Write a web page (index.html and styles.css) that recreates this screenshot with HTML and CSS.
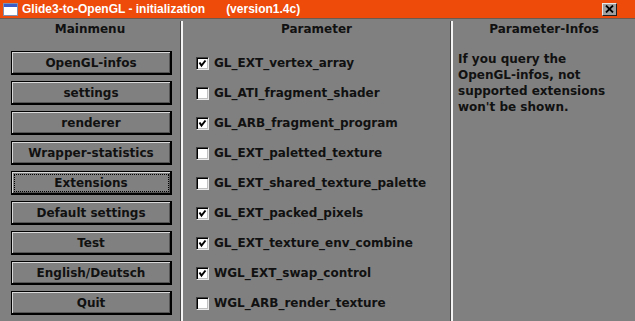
FILE: index.html
```html
<!DOCTYPE html>
<html>
<head>
<meta charset="utf-8">
<link rel="stylesheet" href="styles.css">
</head>
<body>
<div class="window">
  <div class="titlebar">
    <svg class="app-icon" width="15" height="13" viewBox="0 0 15 13">
      <rect x="0.5" y="0.5" width="14" height="12" fill="#ffffff" stroke="#8090b0"/>
      <rect x="1" y="1" width="13" height="3" fill="#3a5bc8"/>
    </svg>
    <div class="title">Glide3-to-OpenGL - initialization</div>
    <div class="version">(version1.4c)</div>
    <div class="closebtn">
      <svg width="9" height="8" viewBox="0 0 9 8"><path d="M1 0.5 L8 7.5 M8 0.5 L1 7.5" stroke="#000" stroke-width="1.8"/></svg>
    </div>
  </div>
  <div class="panes">
    <div class="pane menu">
      <div class="head">Mainmenu</div>
      <div class="buttons">
        <div class="btn">OpenGL-infos</div>
        <div class="btn">settings</div>
        <div class="btn">renderer</div>
        <div class="btn">Wrapper-statistics</div>
        <div class="btn focus">Extensions</div>
        <div class="btn">Default settings</div>
        <div class="btn">Test</div>
        <div class="btn">English/Deutsch</div>
        <div class="btn">Quit</div>
      </div>
    </div>
    <div class="pane params">
      <div class="head">Parameter</div>
      <div class="rows">
        <div class="row"><span class="cb on"><svg width="9" height="9" viewBox="0 0 9 9"><path d="M1.5 3.5 L3.5 6.5 L7.5 1.5" fill="none" stroke="#000" stroke-width="2"/></svg></span>GL_EXT_vertex_array</div>
        <div class="row"><span class="cb"></span>GL_ATI_fragment_shader</div>
        <div class="row"><span class="cb on"><svg width="9" height="9" viewBox="0 0 9 9"><path d="M1.5 3.5 L3.5 6.5 L7.5 1.5" fill="none" stroke="#000" stroke-width="2"/></svg></span>GL_ARB_fragment_program</div>
        <div class="row"><span class="cb"></span>GL_EXT_paletted_texture</div>
        <div class="row"><span class="cb"></span>GL_EXT_shared_texture_palette</div>
        <div class="row"><span class="cb on"><svg width="9" height="9" viewBox="0 0 9 9"><path d="M1.5 3.5 L3.5 6.5 L7.5 1.5" fill="none" stroke="#000" stroke-width="2"/></svg></span>GL_EXT_packed_pixels</div>
        <div class="row"><span class="cb on"><svg width="9" height="9" viewBox="0 0 9 9"><path d="M1.5 3.5 L3.5 6.5 L7.5 1.5" fill="none" stroke="#000" stroke-width="2"/></svg></span>GL_EXT_texture_env_combine</div>
        <div class="row"><span class="cb on"><svg width="9" height="9" viewBox="0 0 9 9"><path d="M1.5 3.5 L3.5 6.5 L7.5 1.5" fill="none" stroke="#000" stroke-width="2"/></svg></span>WGL_EXT_swap_control</div>
        <div class="row"><span class="cb"></span>WGL_ARB_render_texture</div>
      </div>
    </div>
    <div class="pane infos">
      <div class="head">Parameter-Infos</div>
      <p class="info">If you query the<br>OpenGL-infos, not<br>supported extensions<br>won't be shown.</p>
    </div>
  </div>
</div>
</body>
</html>
```
FILE: styles.css
```css
* { box-sizing: border-box; }
html, body { margin: 0; padding: 0; background: #808080; overflow: hidden; }
body {
  font-family: "DejaVu Sans", Verdana, sans-serif;
  font-weight: bold;
  font-size: 12px;
  color: #111;
}
.window { width: 100%; max-width: 635px; height: 321px; overflow: hidden; background: #808080; }
.titlebar {
  height: 19px;
  background: #ee4a0a;
  border-bottom: 1px solid #6a5a50;
  display: grid;
  grid-template-columns: 15px auto auto 1fr;
  align-items: center;
  padding: 0 4px 0 3px;
  color: #fff;
  line-height: 16px;
  font-family: "Liberation Sans", Arial, sans-serif;
  font-size: 12px;
}
.app-icon { display: block; }
.title { margin-left: 4px; }
.version { margin-left: 21px; }
.closebtn {
  justify-self: end;
  margin-right: 14px;
  width: 15px;
  height: 13px;
  background: #a0a0a0;
  border-top: 1px solid #e8e8e8;
  border-left: 1px solid #e8e8e8;
  border-right: 1px solid #202020;
  border-bottom: 1px solid #202020;
  display: flex;
  align-items: center;
  justify-content: center;
}
.closebtn svg { display: block; }
.panes { display: flex; height: 302px; padding-top: 2px; }
.pane { height: 100%; }
.head { text-align: center; line-height: 16px; height: 16px; }
.menu { width: 181px; flex: none; border-right: 1px solid #4a4a4a; }
.params { width: 270px; flex: none; border-left: 2px solid #f4f4f4; border-right: 1px solid #4a4a4a; }
.infos { flex: 1; border-left: 2px solid #f4f4f4; }
.buttons { display: flex; flex-direction: column; gap: 6px; margin-top: 14px; padding-left: 11px; }
.btn {
  width: 161px; height: 24px;
  border: 1px solid #000;
  border-right-width: 2px; border-bottom-width: 2px;
  box-shadow: inset 1px 1px #d8d8d8, inset -1px -1px #555;
  display: flex; align-items: center; justify-content: center;
  line-height: 16px;
}
.btn.focus { outline: 1px dotted #000; outline-offset: -4px; }
.rows { margin-top: 11px; padding-left: 13px; }
.row { height: 30px; display: flex; align-items: center; line-height: 16px; }
.cb {
  flex: none;
  width: 13px; height: 13px; margin-right: 5px;
  background: #fff;
  border-top: 1px solid #404040; border-left: 1px solid #404040;
  border-right: 1px solid #e8e8e8; border-bottom: 1px solid #e8e8e8;
  box-shadow: inset 1px 1px #000, inset -1px -1px #c0c0c0;
  display: flex; align-items: center; justify-content: center;
}
.cb svg { display: block; }
.info { margin: 14px 0 0 0; padding-left: 5px; line-height: 16px; }
```
